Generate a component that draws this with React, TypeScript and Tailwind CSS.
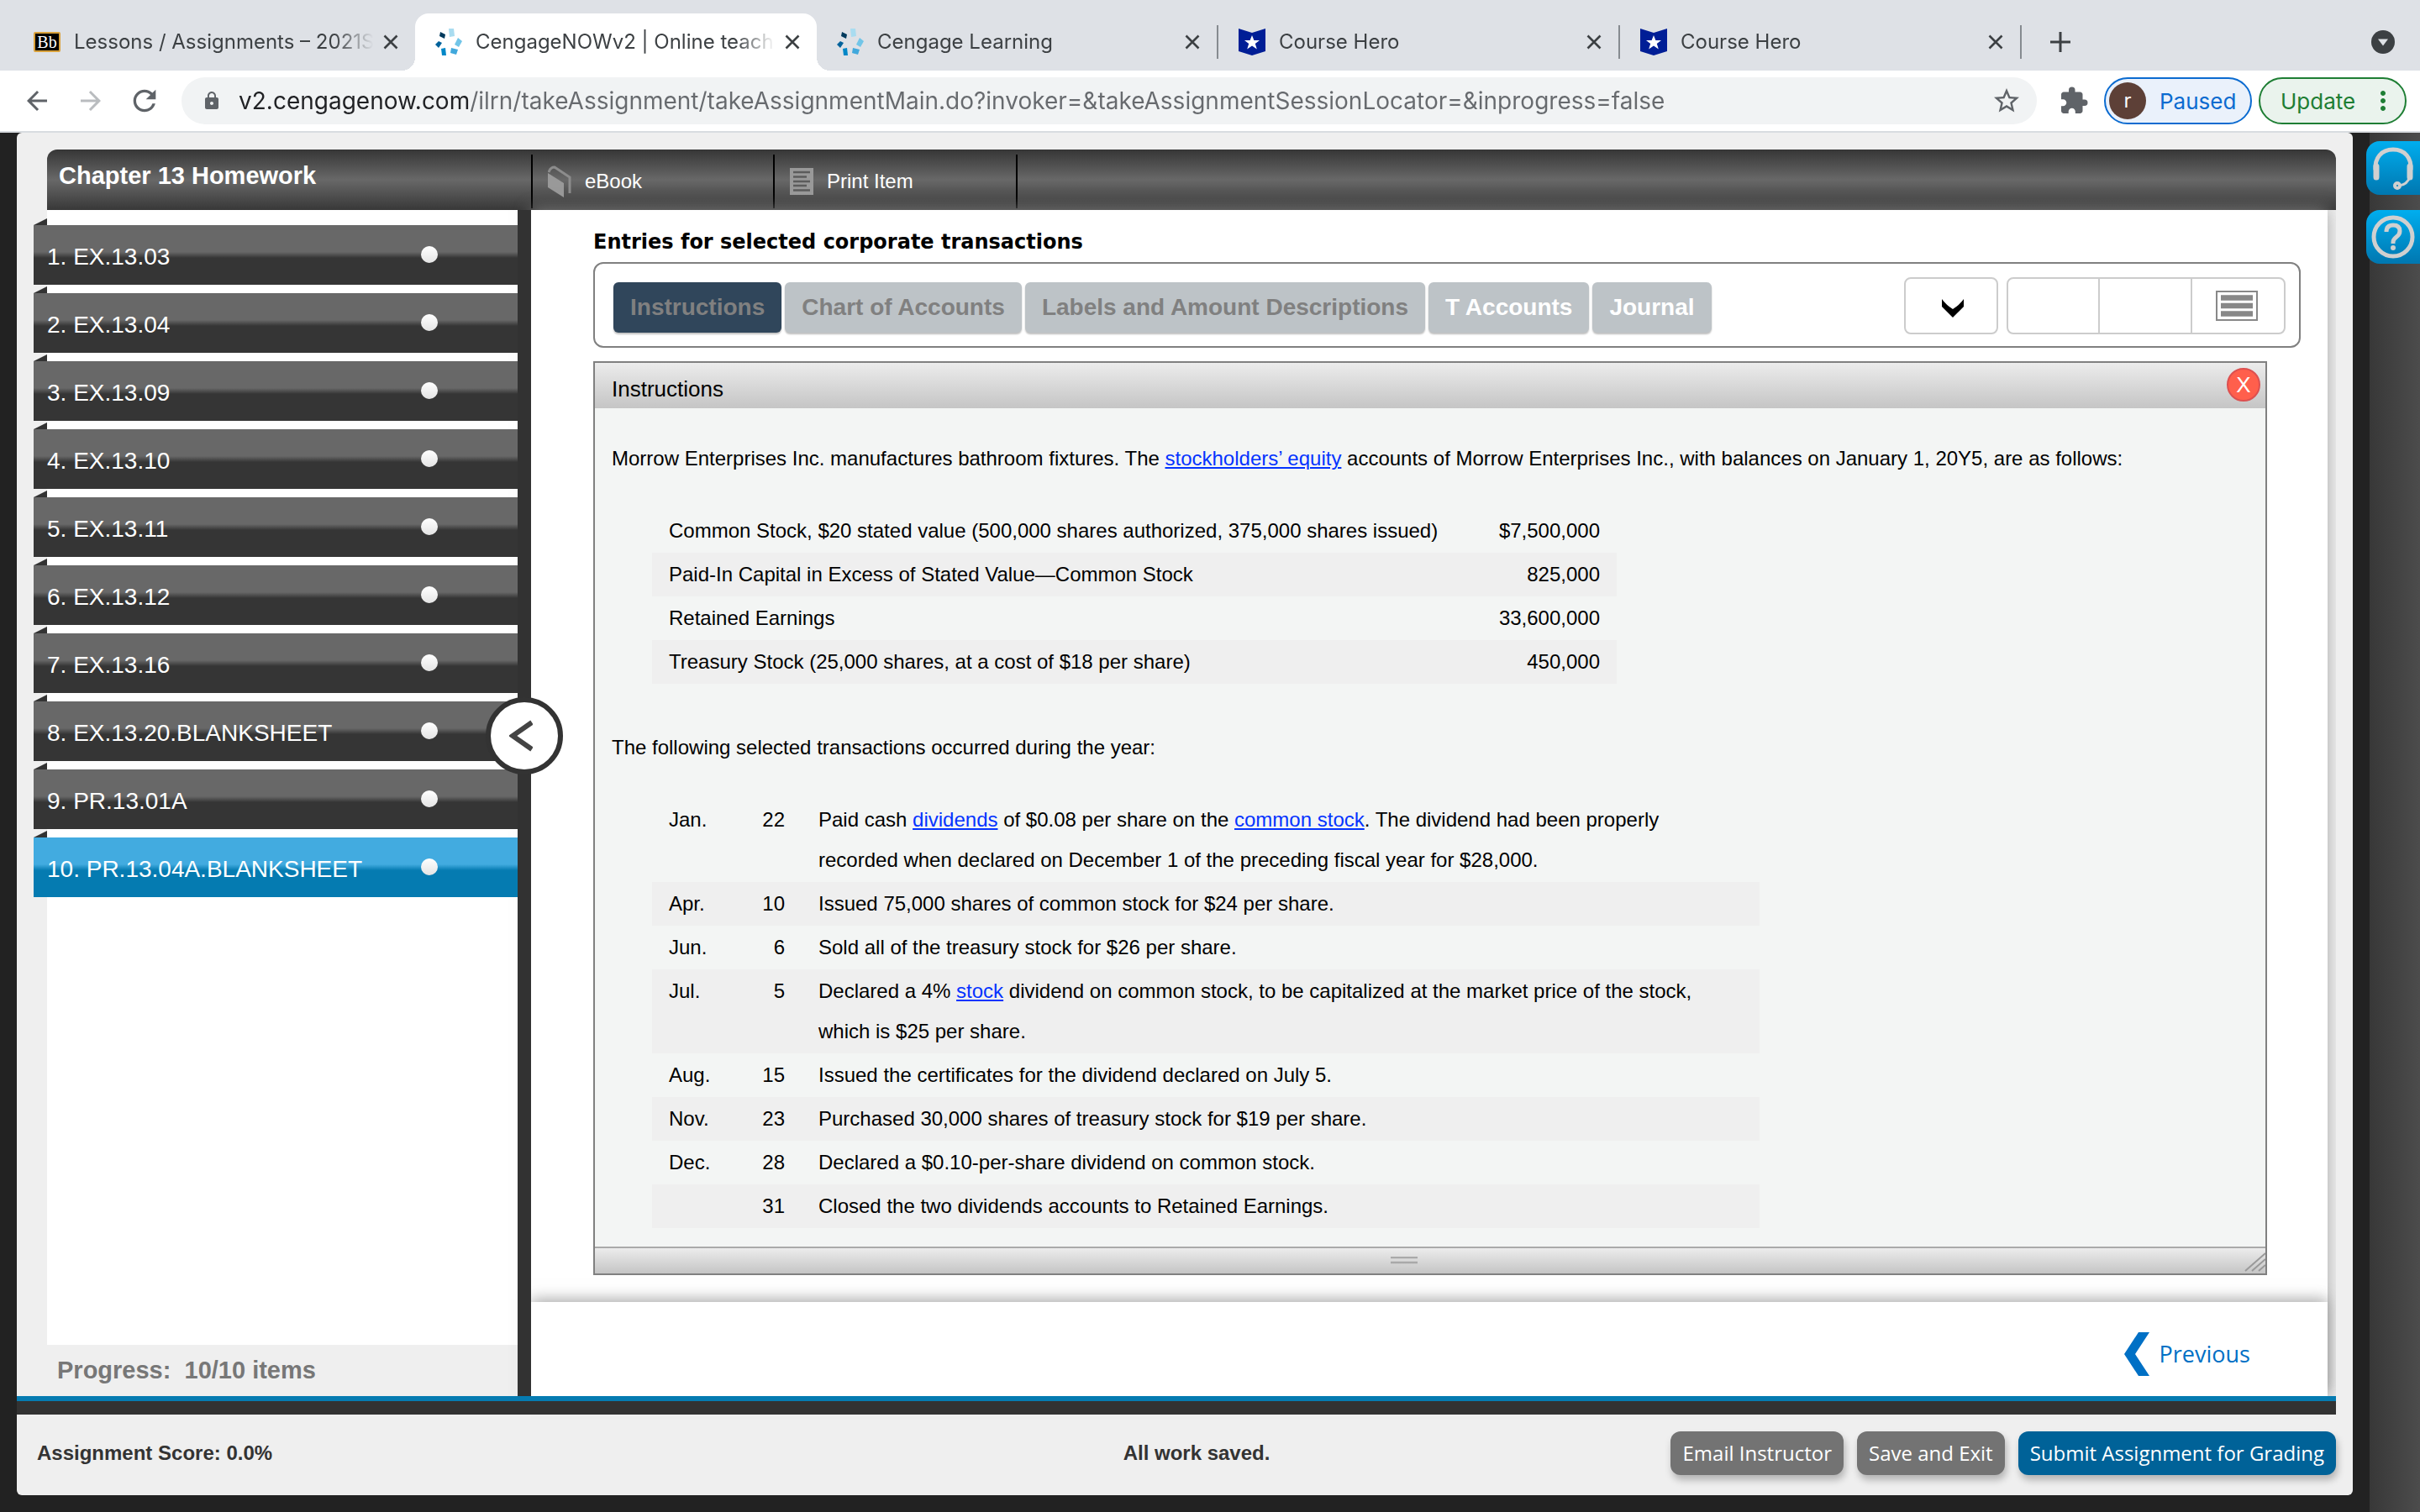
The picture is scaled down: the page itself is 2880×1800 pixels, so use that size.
import React from 'react';
import { MdArrowBack, MdArrowForward, MdExtension, MdLock, MdMoreVert, MdRefresh, MdStarBorder } from 'react-icons/md';

const CengageIcon = () => (
  <svg viewBox="0 0 32 32" className="w-8 h-8 shrink-0">
    <path d="M16 0l6 0 1 9-6 1z" fill="#a9dcf0" />
    <path d="M27 11l5 4-4 7-5-3z" fill="#71c5e8" />
    <path d="M19 23l8 2-2 6-7-2z" fill="#41a8dc" />
    <path d="M7 24l5-1 1 9-5 0z" fill="#0087c7" />
    <path d="M4 15l4 2-4 6-4-4z" fill="#00629b" />
    <path d="M6 4l6 3-1 5-6-3z" fill="#003a5d" />
  </svg>
);

const CourseHeroIcon = () => (
  <svg viewBox="0 0 32 32" className="w-8 h-8 shrink-0">
    <path d="M0 0l16 5L32 0v27l-16 5-16-5z" fill="#001e96" />
    <path d="M16 8l2.400 6h6.600l-5.200 4 2 6.500-5.800-4-5.800 4 2-6.500-5.200-4h6.600z" fill="#fff" />
  </svg>
);

const BlackboardIcon = () => (
  <span className="w-8 h-6 shrink-0 flex items-center justify-center rounded-xs border-2 border-[#d9a13b] bg-black text-white text-xl leading-none font-['Liberation_Serif',serif]">
    Bb
  </span>
);

const CloseIcon = () => (
  <svg viewBox="0 0 18 18" className="w-[18px] h-[18px]" stroke="#3c4043" strokeWidth="2.600">
    <path d="M1.500 1.500l15 15M16.500 1.500l-15 15" />
  </svg>
);

const tabs = [
  { icon: <BlackboardIcon />, title: 'Lessons / Assignments – 2021S', active: false },
  { icon: <CengageIcon />, title: 'CengageNOWv2 | Online teach', active: true },
  { icon: <CengageIcon />, title: 'Cengage Learning', active: false },
  { icon: <CourseHeroIcon />, title: 'Course Hero', active: false },
  { icon: <CourseHeroIcon />, title: 'Course Hero', active: false },
];

const items = [
  '1. EX.13.03',
  '2. EX.13.04',
  '3. EX.13.09',
  '4. EX.13.10',
  '5. EX.13.11',
  '6. EX.13.12',
  '7. EX.13.16',
  '8. EX.13.20.BLANKSHEET',
  '9. PR.13.01A',
  '10. PR.13.04A.BLANKSHEET',
];

const sheets = [
  { label: 'Instructions', style: 'bg-[#30465b] text-[#808080]' },
  { label: 'Chart of Accounts', style: 'bg-[#bdc3c7] text-[#808080]' },
  { label: 'Labels and Amount Descriptions', style: 'bg-[#bdc3c7] text-[#808080]' },
  { label: 'T Accounts', style: 'bg-[#bdc3c7] text-white' },
  { label: 'Journal', style: 'bg-[#bdc3c7] text-white' },
];

const balances = [
  ['Common Stock, $20 stated value (500,000 shares authorized, 375,000 shares issued)', '$7,500,000'],
  ['Paid-In Capital in Excess of Stated Value—Common Stock', '825,000'],
  ['Retained Earnings', '33,600,000'],
  ['Treasury Stock (25,000 shares, at a cost of $18 per share)', '450,000'],
];

const Term = ({ children }: { children: React.ReactNode }) => (
  <a href="#" className="text-[#0433ff] underline decoration-2 underline-offset-2">{children}</a>
);

const transactions = [
  {
    month: 'Jan.',
    day: '22',
    text: (
      <>
        Paid cash <Term>dividends</Term> of $0.08 per share on the <Term>common stock</Term>. The dividend had been properly
        <br />
        recorded when declared on December 1 of the preceding fiscal year for $28,000.
      </>
    ),
  },
  { month: 'Apr.', day: '10', text: 'Issued 75,000 shares of common stock for $24 per share.' },
  { month: 'Jun.', day: '6', text: 'Sold all of the treasury stock for $26 per share.' },
  {
    month: 'Jul.',
    day: '5',
    text: (
      <>
        Declared a 4% <Term>stock</Term> dividend on common stock, to be capitalized at the market price of the stock,
        <br />
        which is $25 per share.
      </>
    ),
  },
  { month: 'Aug.', day: '15', text: 'Issued the certificates for the dividend declared on July 5.' },
  { month: 'Nov.', day: '23', text: 'Purchased 30,000 shares of treasury stock for $19 per share.' },
  { month: 'Dec.', day: '28', text: 'Declared a $0.10-per-share dividend on common stock.' },
  { month: '', day: '31', text: 'Closed the two dividends accounts to Retained Earnings.' },
];

const TabStrip = () => (
  <div className="flex bg-[#dee1e6] pt-4 pl-4 pr-[30px] text-2xl text-[#3c4043]">
    <ul className="flex h-[68px] items-center">
      {tabs.map((tab, i) => (
        <li
          key={i}
          className={
            'relative w-[478px] flex items-center pl-6 pr-5 ' +
            (tab.active ? 'h-full bg-white rounded-t-2xl' : i > 0 ? 'h-10 border-r-2 border-[#868b90]' : 'h-10')
          }
        >
          {tab.active && (
            <>
              <span className="absolute bottom-0 -left-4 w-4 h-4 bg-[radial-gradient(circle_at_0_0,transparent_16px,#fff_16px)]" />
              <span className="absolute bottom-0 -right-4 w-4 h-4 bg-[radial-gradient(circle_at_100%_0,transparent_16px,#fff_16px)]" />
            </>
          )}
          {tab.icon}
          <span className="flex-1 ml-4 mr-2 whitespace-nowrap [mask-image:linear-gradient(to_right,#000_86%,transparent_99%)]">{tab.title}</span>
          <button aria-label="Close tab"><CloseIcon /></button>
        </li>
      ))}
    </ul>
    <button aria-label="New tab" className="ml-[34px] h-[68px]">
      <svg viewBox="0 0 24 24" className="w-6 h-6" stroke="#3c4043" strokeWidth="3">
        <path d="M12 0v24M0 12h24" />
      </svg>
    </button>
    <button aria-label="Search tabs" className="ml-auto h-[68px]">
      <svg viewBox="0 0 28 28" className="w-7 h-7">
        <circle cx="14" cy="14" r="14" fill="#3c4043" />
        <path d="M8 10.500h12l-6 8z" fill="#dee1e6" />
      </svg>
    </button>
  </div>
);

const AddressBar = () => (
  <div className="flex items-center h-[74px] bg-white border-b-2 border-[#d8dce0] pl-[26px] pr-4 text-[#5f6368]">
    <button aria-label="Back"><MdArrowBack className="w-9 h-9" /></button>
    <button aria-label="Forward" className="ml-7 text-[#b9bcbf]"><MdArrowForward className="w-9 h-9" /></button>
    <button aria-label="Reload" className="ml-[26px]"><MdRefresh className="w-10 h-10" /></button>
    <div className="flex items-center flex-1 h-14 ml-6 pl-6 pr-[18px] rounded-full bg-[#f1f3f4]">
      <MdLock className="w-6 h-6" />
      <input
        aria-label="Address"
        className="flex-1 ml-5 text-[28px] outline-none text-transparent bg-clip-text bg-[linear-gradient(to_right,#202124_275px,#676a6e_275px)]"
        defaultValue="v2.cengagenow.com/ilrn/takeAssignment/takeAssignmentMain.do?invoker=&takeAssignmentSessionLocator=&inprogress=false"
      />
      <button aria-label="Bookmark"><MdStarBorder className="w-9 h-9" /></button>
    </div>
    <button aria-label="Extensions" className="ml-[26px]"><MdExtension className="w-9 h-9" /></button>
    <button className="flex items-center h-14 w-44 ml-[18px] pl-1 rounded-full border-2 border-[#0b6bd0] bg-[#eaf1fb] text-[#0b6bd0] text-[26px]">
      <span className="flex items-center justify-center w-11 h-11 mr-4 rounded-full bg-[#5d4037] text-white text-2xl">r</span>
      Paused
    </button>
    <button className="flex items-center h-14 w-44 ml-2 pl-6 rounded-full border-2 border-[#1e7e34] bg-[#eaf3ed] text-[#1e7e34] text-[26px]">
      Update
      <MdMoreVert className="w-9 h-9 ml-auto mr-2" />
    </button>
  </div>
);

const HeaderBar = () => (
  <div className="flex h-[72px] ml-9 rounded-t-xl text-white bg-[linear-gradient(#363636,#686868_50%,#383838)]">
    <h1 className="w-[576px] pl-3.5 pt-3 text-[29px] leading-[38px] font-bold">Chapter 13 Homework</h1>
    <nav className="flex h-16 mt-1.5 text-2xl border-l-2 border-black">
      <a href="#" className="flex items-center w-[288px] pl-[18px] gap-4 border-r-2 border-black">
        <svg viewBox="0 0 28 38" className="w-7 h-[38px]">
          <path d="M0 9l19 12v17L0 26z" fill="#999" />
          <path d="M1 8q2-6 7-6l18 12v19" fill="none" stroke="#8c8c8c" strokeWidth="3" />
        </svg>
        eBook
      </a>
      <a href="#" className="flex items-center w-[289px] pl-[18px] gap-4 border-r-2 border-black">
        <svg viewBox="0 0 28 32" className="w-7 h-8">
          <path d="M0 0h28v32H0z" fill="#999" />
          <path d="M4 5h20M4 10.500h16M4 16h20M4 21h16M4 26.500h20" stroke="#5c5c5c" strokeWidth="2.400" />
        </svg>
        Print Item
      </a>
    </nav>
  </div>
);

const Sidebar = () => (
  <aside className="w-[596px] shrink-0 flex flex-col">
    <div className="flex-1 ml-9 bg-white pt-[18px]">
      <ol className="flex flex-col gap-2.5 -ml-4">
        {items.map((item, i) => (
          <li key={item} className="relative">
            <span className="absolute left-0 -top-2 w-4 h-2 bg-[#333] [clip-path:polygon(100%_0,100%_100%,0_100%)]" />
            <button
              className={
                'flex items-center justify-between w-full h-[71px] pl-4 pr-[95px] pb-0.5 text-left text-[28px] text-white ' +
                (i === items.length - 1
                  ? 'bg-[linear-gradient(#42abe0_45%,#057bb1_55%)]'
                  : 'bg-[linear-gradient(#686868_45%,#353535_55%)]')
              }
            >
              <span className="pt-1.5">{item}</span>
              <span className="w-5 h-5 rounded-full bg-linear-to-b from-white to-[#e4e4e4]" />
            </button>
          </li>
        ))}
      </ol>
    </div>
    <p className="h-[61px] pl-12 text-[29px] leading-[61px] font-bold text-[#777]">Progress:&nbsp; 10/10 items</p>
  </aside>
);

const Toolbar = () => (
  <div className="flex items-center h-[102px] pt-0.5 pl-[22px] pr-4 mr-8 border-2 border-[#808080] rounded-xl">
    <div className="flex gap-1 pt-1">
      {sheets.map((sheet) => (
        <button key={sheet.label} className={'h-[60px] px-5 rounded-md text-[28px] font-bold shadow-[0_2px_2px_rgba(0,0,0,0.25)] ' + sheet.style}>
          {sheet.label}
        </button>
      ))}
    </div>
    <button aria-label="Expand" className="flex items-center justify-center w-28 h-[68px] ml-auto border-2 border-[#ccc] rounded-lg">
      <svg viewBox="0 0 28 22" className="w-7 h-[22px] mt-1.5 ml-1">
        <path d="M1 0q5 7 13 12q8-5 13-12v9q-6 6-13 13q-7-7-13-13z" />
      </svg>
    </button>
    <div className="flex h-[68px] ml-2.5 border-2 border-[#ccc] rounded-lg divide-x-2 divide-[#ccc]">
      <button aria-label="Left view" className="w-[109px]" />
      <button aria-label="Right view" className="w-[110px]" />
      <button aria-label="Stacked view" className="w-[109px] flex items-center justify-center">
        <svg viewBox="0 0 50 36" className="w-[50px] h-9 mr-1">
          <path d="M1 1h48v34H1z" fill="#fff" stroke="#888" strokeWidth="2" />
          <path d="M6 8.500h38M6 18h38M6 27.500h38" stroke="#888" strokeWidth="6.500" />
        </svg>
      </button>
    </div>
  </div>
);

const InstructionsPanel = () => (
  <section className="mt-4 mr-[72px] border-2 border-[#808080] bg-[#f3f5f4] text-2xl leading-[48px] text-black">
    <div className="flex items-center justify-between h-[54px] pl-5 pr-1.5 bg-linear-to-b from-[#ececec] to-[#c5c5c5]">
      <h3 className="pt-2 text-[26px]">Instructions</h3>
      <button aria-label="Close" className="w-10 h-10 mb-0.5 rounded-full border-2 border-[#dc5050] bg-[#ff5f4c] text-[26px] leading-9 text-white">X</button>
    </div>
    <div className="px-5 pt-9 pb-[22px]">
      <p>
        Morrow Enterprises Inc. manufactures bathroom fixtures. The <Term>stockholders’ equity</Term> accounts of Morrow Enterprises Inc., with balances on January 1, 20Y5, are as follows:
      </p>
      <table className="w-[1148px] mt-9 ml-12">
        <tbody>
          {balances.map(([name, amount]) => (
            <tr key={name} className="even:bg-[#efefef]">
              <td className="px-5 py-0.5">{name}</td>
              <td className="px-5 py-0.5 text-right">{amount}</td>
            </tr>
          ))}
        </tbody>
      </table>
      <p className="mt-[52px]">The following selected transactions occurred during the year:</p>
      <table className="w-[1318px] mt-9 ml-12">
        <tbody>
          {transactions.map((t) => (
            <tr key={t.day} className="align-top even:bg-[#efefef]">
              <td className="w-[92px] pl-5 py-0.5">{t.month}</td>
              <td className="w-[86px] pr-5 py-0.5 text-right">{t.day}</td>
              <td className="px-5 py-0.5">{t.text}</td>
            </tr>
          ))}
        </tbody>
      </table>
    </div>
    <div className="relative flex items-center justify-center h-8 pr-[62px] border-t-2 border-[#aaa] bg-linear-to-b from-[#ececec] to-[#c5c5c5]">
      <svg viewBox="0 0 32 10" className="w-8 h-2.5">
        <path d="M0 1h32M0 7h32" stroke="#a9a9a9" strokeWidth="2.500" />
      </svg>
      {/* resize handle */}
      <svg viewBox="0 0 26 24" className="absolute right-0 bottom-0.5 w-[26px] h-6" stroke="#999" strokeWidth="2">
        <path d="M2 23L26 2M10 23L26 9M18 23L26 16" />
      </svg>
    </div>
  </section>
);

const Content = () => (
  <main className="flex-1 flex flex-col mr-2.5 bg-white shadow-[0_0_18px_rgba(150,150,150,0.8)]">
    <div className="flex-1 pl-[74px] pt-5 pb-8">
      <h2 className="mb-1.5 text-2xl leading-9 font-bold text-black font-['DejaVu_Sans',sans-serif]">Entries for selected corporate transactions</h2>
      <Toolbar />
      <InstructionsPanel />
    </div>
    <div className="flex items-center justify-end h-28 pt-3 pr-[92px] shadow-[0_-4px_16px_rgba(120,120,120,0.6)]">
      <a href="#" className="flex items-center gap-3 text-[27px] text-[#0070c5] font-['Open_Sans',sans-serif]">
        <svg viewBox="0 0 30 52" className="w-[30px] h-[52px]">
          <path d="M17 0h13L13 26l17 26H17L0 26z" fill="#0070c5" />
        </svg>
        Previous
      </a>
    </div>
  </main>
);

const StatusBar = () => (
  <footer className="flex items-center h-24 pl-6 pr-5 pb-1 text-2xl">
    <p className="flex-1 font-bold text-[#333]">Assignment Score: 0.0%</p>
    <p className="pl-6 font-bold text-[#333]">All work saved.</p>
    <div className="flex-1 flex justify-end gap-4 text-white font-['Open_Sans',sans-serif]">
      <button className="h-[52px] px-3.5 rounded-xl bg-[#737373] shadow-[2px_6px_8px_rgba(0,0,0,0.25)]">Email Instructor</button>
      <button className="h-[52px] px-3.5 rounded-xl bg-[#737373] shadow-[2px_6px_8px_rgba(0,0,0,0.25)]">Save and Exit</button>
      <button className="h-[52px] px-3.5 rounded-xl bg-[#006298] shadow-[2px_6px_8px_rgba(0,0,0,0.25)]">Submit Assignment for Grading</button>
    </div>
  </footer>
);

const SupportRail = () => (
  <div className="w-[60px] shrink-0 flex flex-col gap-[18px] pt-2.5 bg-linear-to-r from-[#383838] to-[#4c4c4c]">
    <button aria-label="Support" className="flex items-center justify-center w-16 h-16 -ml-1 rounded-l-2xl bg-linear-to-b from-[#00aeef] to-[#0077b0]">
      <svg viewBox="0 0 52 52" className="w-[52px] h-[52px]" fill="none" stroke="#d0d0d0">
        <path d="M5 28C4 14 12 4 26 4s22 10 21 24" strokeWidth="5" />
        <path d="M6 24v13M46 24v13" strokeWidth="7" strokeLinecap="round" />
        <path d="M46 36q-3 10-13 11" strokeWidth="3" />
        <circle cx="31" cy="47" r="3" strokeWidth="4" />
      </svg>
    </button>
    <button aria-label="Help" className="flex items-center justify-center w-16 h-16 -ml-1 rounded-l-2xl bg-linear-to-b from-[#00aeef] to-[#0077b0]">
      <svg viewBox="0 0 52 52" className="w-[52px] h-[52px]" fill="none" stroke="#d0d0d0">
        <circle cx="26" cy="26" r="23" strokeWidth="5" />
        <path d="M18 20q0-8 8-8t8 7q0 4-4 7t-4 6v2" strokeWidth="5" />
        <circle cx="26" cy="39" r="1.500" strokeWidth="3" />
      </svg>
    </button>
  </div>
);

export default function App() {
  return (
    <div className="min-h-screen flex flex-col bg-[#222] font-['Liberation_Sans',Arial,sans-serif]">
      <header className="font-['Inter',sans-serif]">
        <TabStrip />
        <AddressBar />
      </header>
      <div className="flex-1 flex">
        <div className="flex-1 flex flex-col mx-5 mb-5 pt-5 rounded-md bg-[#efefef]">
          <div className="flex-1 flex flex-col mr-5 overflow-x-clip">
            <HeaderBar />
            <div className="flex-1 flex">
              <Sidebar />
              <div className="relative w-4 shrink-0 bg-[#323232]">
                <button aria-label="Collapse list" className="absolute z-10 top-[580px] -left-[38px] w-[92px] h-[92px] flex items-center justify-center rounded-full border-[6px] border-[#333] bg-white">
                  <svg viewBox="0 0 28 38" className="w-7 h-[38px] mr-2" fill="none" stroke="#444" strokeWidth="6">
                    <path d="M27 3L4 19l23 16" />
                  </svg>
                </button>
              </div>
              <Content />
            </div>
            <div className="h-[22px] border-t-[6px] border-[#057bb1] bg-[#323232]" />
          </div>
          <StatusBar />
        </div>
        <SupportRail />
      </div>
    </div>
  );
}
